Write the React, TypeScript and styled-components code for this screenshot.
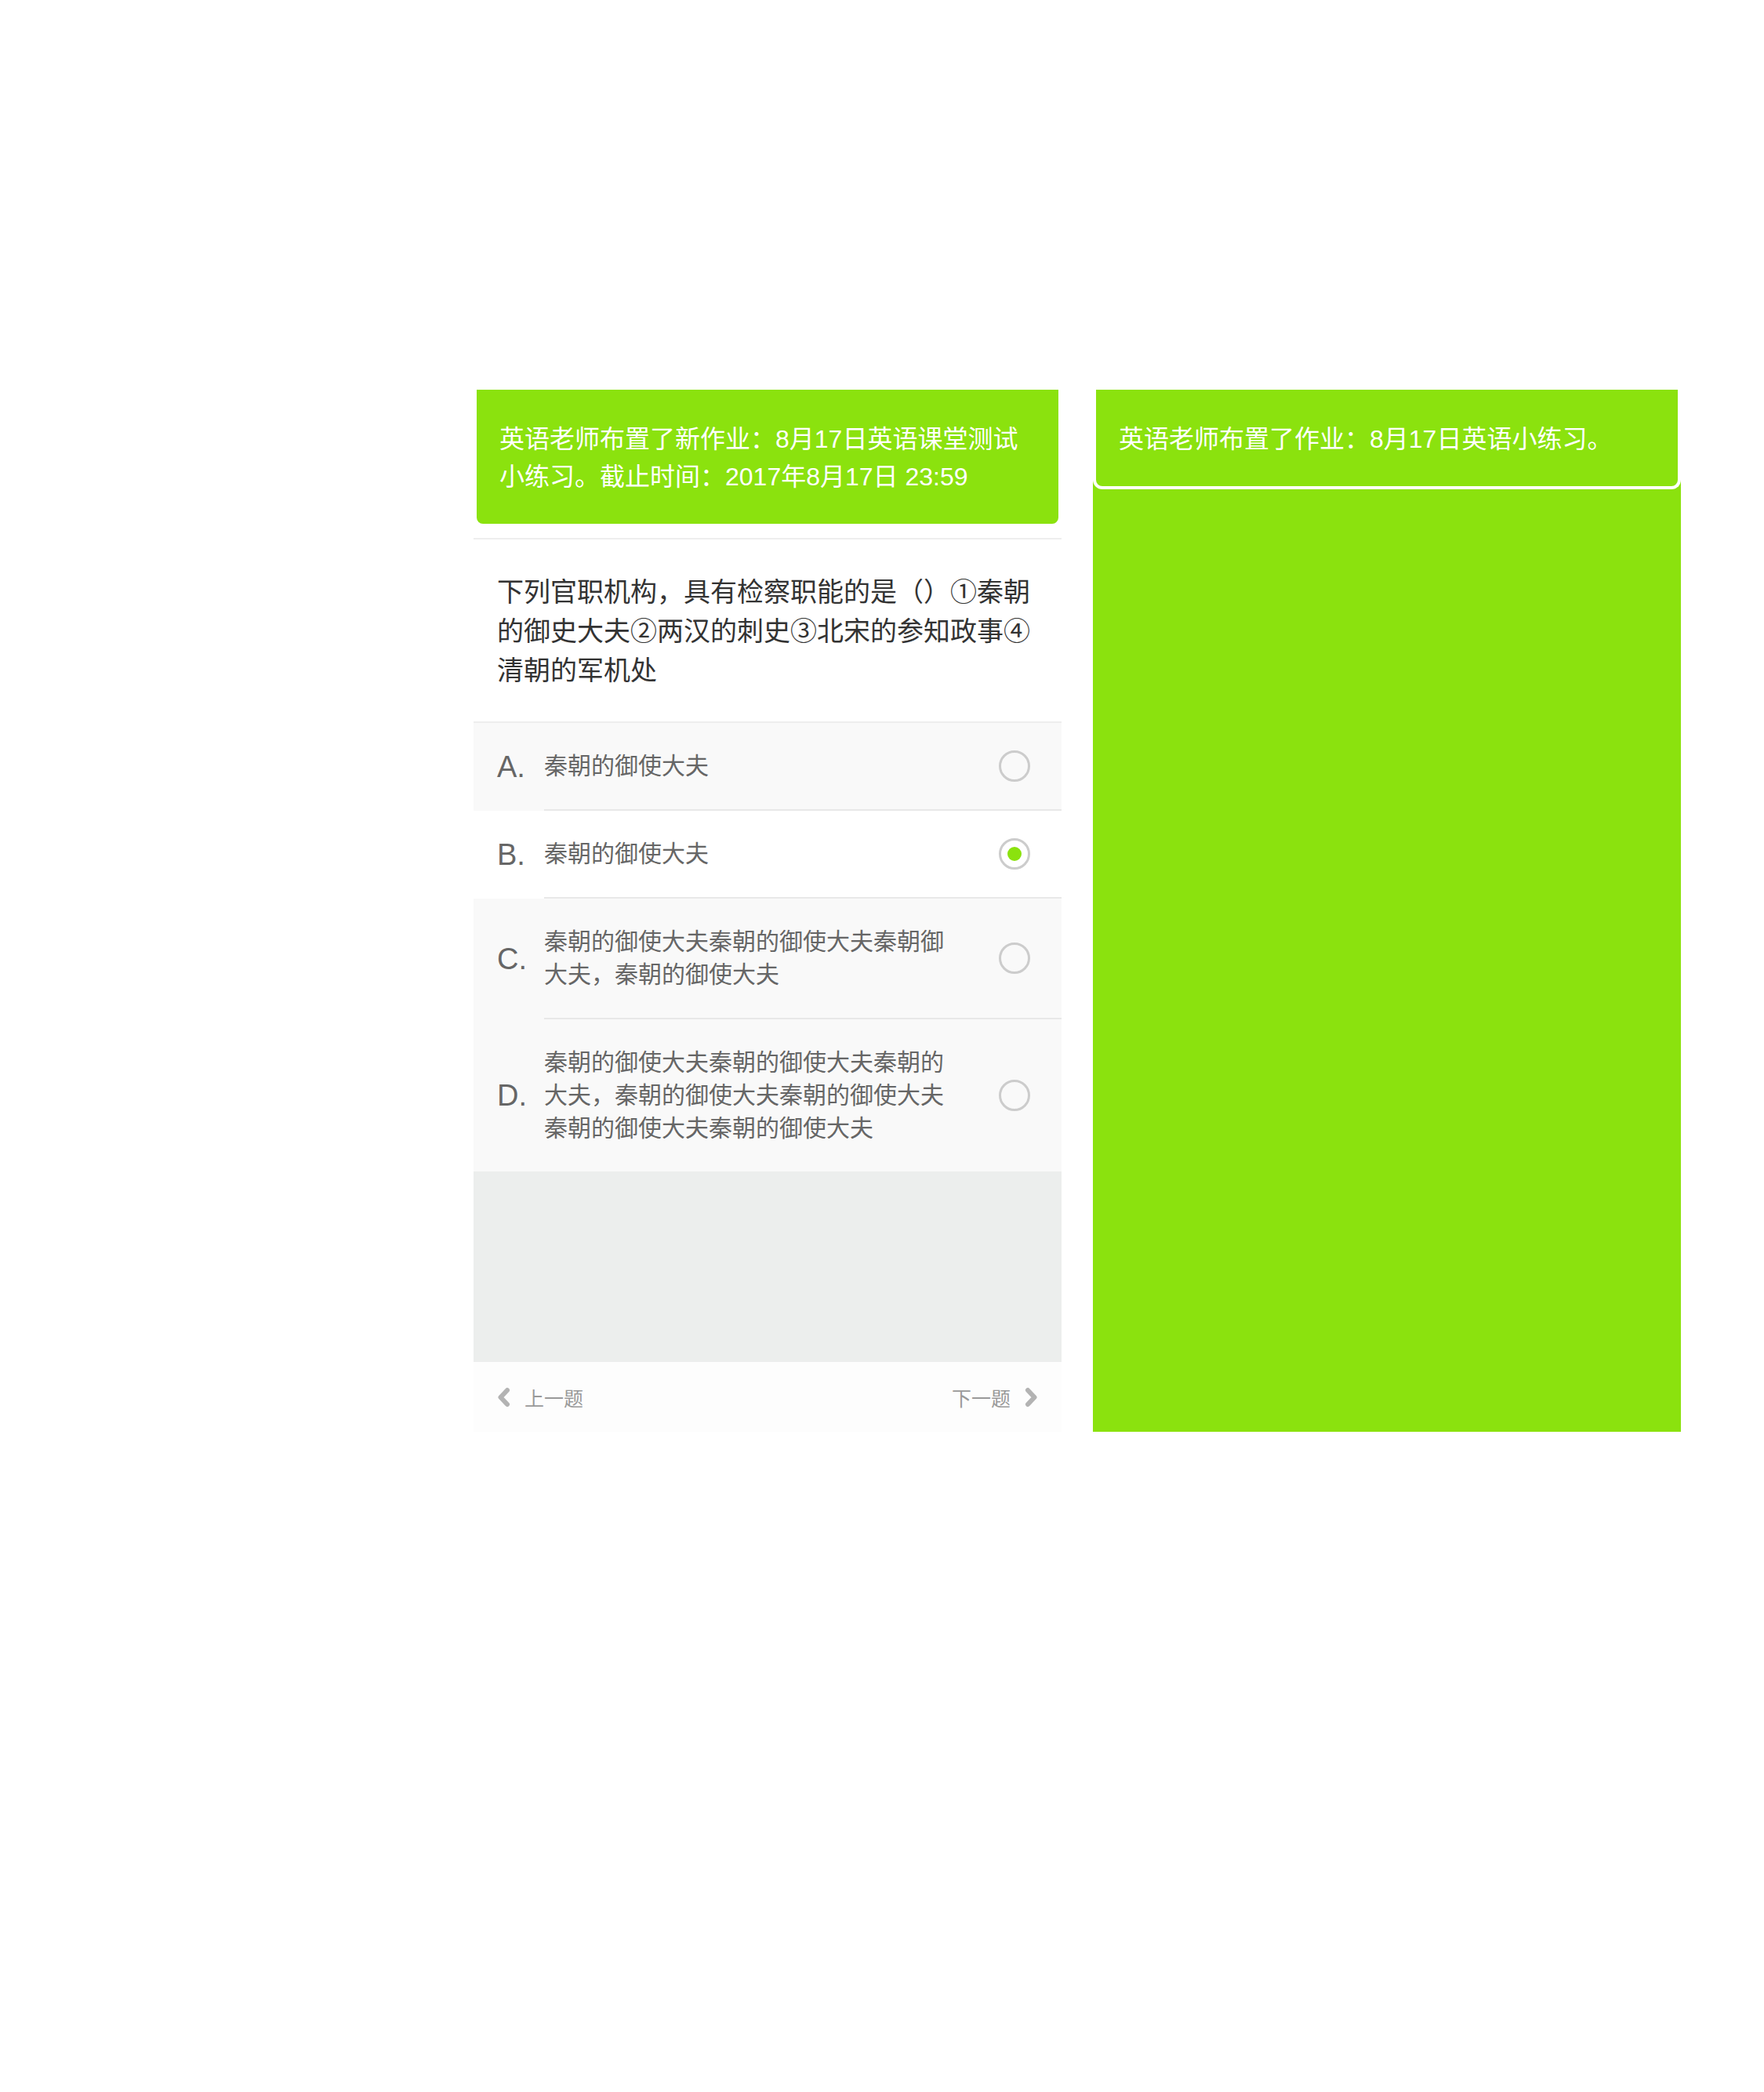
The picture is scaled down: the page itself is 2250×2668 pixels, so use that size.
import styled, {createGlobalStyle, css} from "styled-components";

const GlobalStyle = createGlobalStyle`
    body {
        margin: 0;
        background: #ffffff;
        font-family: "Liberation Sans", "Noto Sans CJK SC", sans-serif;
    }
`;

const GREEN = "#8be20e";

const Page = styled.div`
    display: flex;
    flex-direction: row;
    align-items: flex-start;
    gap: 40px;
    padding: 497px 0 0 604px;
`;

const Phone = styled.section<{ $green?: boolean }>`
    width: 750px;
    height: 1329px;
    display: flex;
    flex-direction: column;
    background-color: ${p => (p.$green ? GREEN : "#ffffff")};
`;

const Notice = styled.div`
    background-color: ${GREEN};
    border: 4px solid #ffffff;
    border-top: none;
    border-radius: 0 0 12px 12px;
    color: #ffffff;
    font-size: 32px;
    line-height: 48px;
    padding: 39px 29px 36px;
`;

const Question = styled.div`
    margin-top: 14px;
    border-top: 2px solid #eeeeee;
    padding: 42px 32px 40px 30px;
    font-size: 34px;
    line-height: 50px;
    color: #333333;
`;

const Options = styled.ul`
    list-style: none;
    margin: 0;
    padding: 0;
    border-top: 2px solid #eeeeee;
`;

const OptionRow = styled.li<{ $shaded?: boolean }>`
    display: flex;
    align-items: center;
    padding-left: 30px;
    background-color: ${p => (p.$shaded ? "#f9f9f9" : "#ffffff")};
`;

const Letter = styled.span`
    width: 60px;
    flex-shrink: 0;
    font-family: "Liberation Sans", sans-serif;
    font-size: 38px;
    color: #666666;
`;

const OptionBody = styled.div<{ $divider?: boolean }>`
    flex: 1;
    display: flex;
    align-items: center;
    padding: 34px 40px 34px 0;
    ${p => p.$divider && css`border-bottom: 2px solid #e8e8e8;`}
`;

const OptionText = styled.p`
    margin: 0;
    width: 520px;
    font-size: 30px;
    line-height: 42px;
    color: #666666;
`;

const Radio = styled.span<{ $checked?: boolean }>`
    margin-left: auto;
    width: 40px;
    height: 40px;
    box-sizing: border-box;
    border: 3px solid #cccccc;
    border-radius: 50%;
    display: flex;
    align-items: center;
    justify-content: center;
    &::after {
        content: "";
        width: 18px;
        height: 18px;
        border-radius: 50%;
        background-color: ${p => (p.$checked ? GREEN : "transparent")};
    }
`;

const Blank = styled.div`
    flex: 1;
    background-color: #eceeed;
`;

const Footer = styled.div`
    height: 89px;
    display: flex;
    align-items: center;
    justify-content: space-between;
    padding: 0 30px;
    background-color: #fdfdfd;
`;

const NavButton = styled.span`
    display: flex;
    align-items: center;
    gap: 18px;
    font-family: "Noto Sans CJK SC", sans-serif;
    font-size: 25px;
    color: #999999;
`;

const Chevron = ({dir}: { dir: "left" | "right" }) => (
    <svg width="17" height="26" viewBox="0 0 17 26">
        <polyline
            points={dir === "left" ? "13,4 4.5,13 13,22" : "4,4 12.5,13 4,22"}
            fill="none"
            stroke="#b3b3b3"
            strokeWidth="6"
            strokeLinecap="round"
            strokeLinejoin="round"
        />
    </svg>
);

const options = [
    {key: "A", text: "秦朝的御使大夫", shaded: true},
    {key: "B", text: "秦朝的御使大夫", shaded: false, checked: true},
    {key: "C", text: "秦朝的御使大夫秦朝的御使大夫秦朝御大夫，秦朝的御使大夫", shaded: true},
    {key: "D", text: "秦朝的御使大夫秦朝的御使大夫秦朝的大夫，秦朝的御使大夫秦朝的御使大夫秦朝的御使大夫秦朝的御使大夫", shaded: true},
];

export function App() {
    return (
        <>
            <GlobalStyle/>
            <Page>
                <Phone>
                    <Notice>英语老师布置了新作业：8月17日英语课堂测试小练习。截止时间：2017年8月17日 23:59</Notice>
                    <Question>下列官职机构，具有检察职能的是（）①秦朝的御史大夫②两汉的刺史③北宋的参知政事④清朝的军机处</Question>
                    <Options>
                        {options.map((o, i) => (
                            <OptionRow key={o.key} $shaded={o.shaded}>
                                <Letter>{o.key}.</Letter>
                                <OptionBody $divider={i < options.length - 1}>
                                    <OptionText>{o.text}</OptionText>
                                    <Radio $checked={o.checked}/>
                                </OptionBody>
                            </OptionRow>
                        ))}
                    </Options>
                    <Blank/>
                    <Footer>
                        <NavButton><Chevron dir="left"/>上一题</NavButton>
                        <NavButton>下一题<Chevron dir="right"/></NavButton>
                    </Footer>
                </Phone>

                <Phone $green>
                    <Notice>英语老师布置了作业：8月17日英语小练习。</Notice>
                </Phone>
            </Page>
        </>
    );
}

export default App;
